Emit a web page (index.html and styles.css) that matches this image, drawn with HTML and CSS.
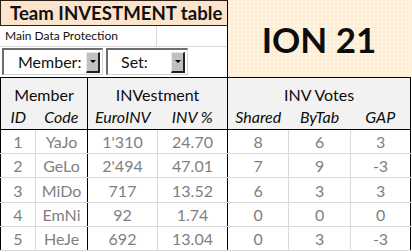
FILE: index.html
```html
<!DOCTYPE html>
<html>
<head>
<meta charset="utf-8">
<link rel="stylesheet" href="styles.css">
</head>
<body>
<div class="sheet">
  <div class="top">
    <div class="left">
      <div class="title">Team INVESTMENT table</div>
      <div class="prot"><span class="pc">Main Data Protection</span><span class="pe"></span></div>
      <div class="drops">
        <div class="dd dd-member"><span class="dd-label">Member:</span><span class="btn"><span class="tri"></span></span></div>
        <div class="dd dd-set"><span class="dd-label">Set:</span><span class="btn"><span class="tri"></span></span></div>
      </div>
    </div>
    <div class="ion">ION 21</div>
  </div>
  <table class="grid">
    <colgroup>
      <col class="c-id"><col class="c-code"><col class="c-eur"><col class="c-pct"><col class="c-sh"><col class="c-by"><col class="c-gap">
    </colgroup>
    <thead>
      <tr class="h1">
        <th colspan="2" class="b">Member</th>
        <th colspan="2" class="b">INVestment</th>
        <th colspan="3" class="b">INV Votes</th>
      </tr>
      <tr class="h2">
        <th>ID</th><th class="b">Code</th>
        <th>EuroINV</th><th class="b">INV %</th>
        <th>Shared</th><th>ByTab</th><th class="b">GAP</th>
      </tr>
    </thead>
    <tbody>
      <tr><td>1</td><td class="b">YaJo</td><td>1'310</td><td class="b">24.70</td><td>8</td><td>6</td><td class="b">3</td></tr>
      <tr><td>2</td><td class="b">GeLo</td><td>2'494</td><td class="b">47.01</td><td>7</td><td>9</td><td class="b">-3</td></tr>
      <tr class="r25"><td>3</td><td class="b">MiDo</td><td>717</td><td class="b">13.52</td><td>6</td><td>3</td><td class="b">3</td></tr>
      <tr><td>4</td><td class="b">EmNi</td><td>92</td><td class="b">1.74</td><td>0</td><td>0</td><td class="b">0</td></tr>
      <tr><td>5</td><td class="b">HeJe</td><td>692</td><td class="b">13.04</td><td>0</td><td>3</td><td class="b">-3</td></tr>
    </tbody>
  </table>
</div>
</body>
</html>
```

FILE: styles.css
```css
* { box-sizing: border-box; }
html, body { margin: 0; padding: 0; background: #ffffff; }
body { width: 412px; height: 252px; overflow: hidden; font-family: Lato, "Liberation Sans", sans-serif; }

.sheet { width: 412px; }

.top { display: grid; grid-template-columns: 227px 185px; height: 77px; }
.left { display: flex; flex-direction: column; }

.title {
  height: 26px;
  background: #fce4cc;
  border: 1px solid #2b2118;
  border-right: none;
  font-weight: 700;
  font-size: 18.6px;
  line-height: 24px;
  padding-left: 9px;
  color: #111;
  white-space: nowrap;
  overflow: hidden;
}

.prot { display: flex; height: 21px; border-bottom: 1px solid #d9d9d9; }
.pc {
  width: 157px;
  border-right: 1px solid #d9d9d9;
  font-size: 12px;
  line-height: 20px;
  padding-left: 5px;
  color: #111;
  white-space: nowrap;
}
.pe { flex: 1; }

.drops { display: flex; gap: 3px; height: 30px; padding: 1px 0 0 2px; }
.dd {
  display: flex;
  align-items: center;
  height: 27px;
  background: #fff;
  border-top: 2px solid #6d6d6d;
  border-left: 2px solid #6d6d6d;
  border-right: 1px solid #d4d4d4;
  border-bottom: 1px solid #d4d4d4;
  padding-right: 2px;
}
.dd-member { width: 101px; }
.dd-set { width: 82px; }
.dd-label { flex: 1; font-size: 16px; color: #111; padding-left: 14px; line-height: 22px; }
.dd-set .dd-label { padding-left: 13px; }
.btn {
  display: flex;
  align-items: center;
  justify-content: center;
  width: 14px;
  height: 21px;
  background: #c0c0c0;
  border-top: 1px solid #e8e8e8;
  border-left: 1px solid #e8e8e8;
  border-right: 2px solid #222;
  border-bottom: 2px solid #222;
}
.tri { width: 0; height: 0; border-left: 3px solid transparent; border-right: 3px solid transparent; border-top: 3px solid #000; }

.ion {
  border-left: 1px solid #000;
  background-color: #feeed6;
  background-image: radial-gradient(circle, #fff7ea 0.8px, transparent 1.2px);
  background-size: 4px 4px;
  display: flex;
  align-items: center;
  justify-content: center;
  font-weight: 700;
  font-size: 35px;
  color: #0d0d0d;
  padding-right: 2px;
}

.grid {
  border-collapse: collapse;
  table-layout: fixed;
  width: 411px;
  border-left: 1px solid #000;
  border-top: 1px solid #000;
}
.c-id { width: 35px; }
.c-code { width: 52px; }
.c-eur { width: 70px; }
.c-pct { width: 70px; }
.c-sh { width: 61px; }
.c-by { width: 62px; }
.c-gap { width: 60px; }

.grid th, .grid td { padding: 0; text-align: center; white-space: nowrap; }
.grid th { background: #f2f2f2; font-weight: 400; color: #0d0d0d; font-size: 16px; }
.grid .h1 { height: 28px; }
.grid .h1 th { vertical-align: bottom; line-height: 20px; padding-bottom: 1px; }
.grid .h2 { height: 24px; }
.grid .h2 th { font-style: italic; border-bottom: 1px solid #000; line-height: 20px; }
.grid td {
  height: 24px;
  color: #7f7f7f;
  font-size: 16px;
  border-right: 1px solid #d9d9d9;
  border-bottom: 1px solid #d9d9d9;
  line-height: 20px;
  padding-top: 1px;
}
.grid tr.r25 td { height: 25px; }
.grid .b { border-right: 1px solid #000; }
.grid td.b { border-right: 1px solid #000; }
```
